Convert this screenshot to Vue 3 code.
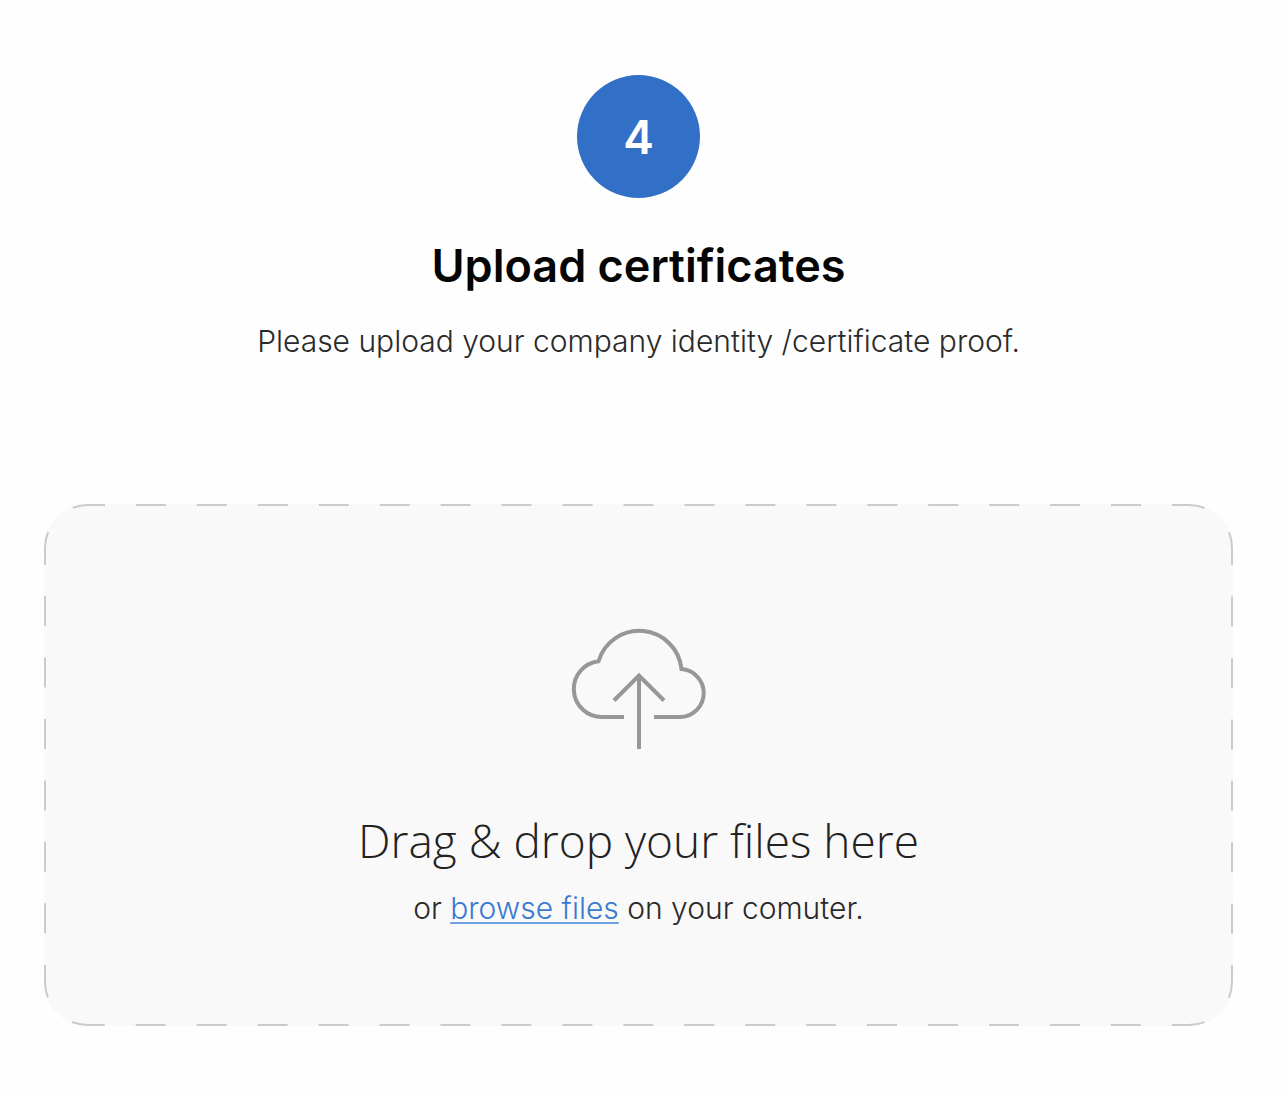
<script setup>
import { computed, onBeforeUnmount, onMounted, ref } from 'vue'

const RADIUS = 43
const DASH = 30
const CORNER_DASH = 33
const CORNER_REACH = 17

const zone = ref(null)
const size = ref({ width: 1189, height: 522 })
let observer

// Fits whole dashes between the two corner dashes of one side.
function sideDashes(length) {
  const room = length - 2 * RADIUS - 2 * CORNER_REACH
  const count = Math.max(0, Math.round((room - DASH) / (2 * DASH + 1)))
  const gap = (room - count * DASH) / (count + 1)
  const list = [CORNER_DASH, gap]
  for (let i = 0; i < count; i++) list.push(DASH, gap)
  const cornerGap = (Math.PI * RADIUS) / 2 - 2 * (CORNER_DASH - CORNER_REACH)
  return [...list, CORNER_DASH, cornerGap]
}

const dashes = computed(() => {
  const across = sideDashes(size.value.width - 2)
  const down = sideDashes(size.value.height - 2)
  return [...across, ...down, ...across, ...down].join(' ')
})

onMounted(() => {
  const measure = () => {
    size.value = { width: zone.value.offsetWidth, height: zone.value.offsetHeight }
  }
  measure()
  observer = new ResizeObserver(measure)
  observer.observe(zone.value)
})
onBeforeUnmount(() => observer?.disconnect())
</script>

<template>
  <main class="page">
    <header class="intro">
      <span class="step">4</span>
      <h1 class="title">Upload certificates</h1>
      <p class="text">Please upload your company identity /certificate proof.</p>
    </header>

    <section ref="zone" class="zone">
      <svg class="outline" aria-hidden="true">
        <rect
          x="1" y="1" :rx="RADIUS"
          :width="size.width - 2" :height="size.height - 2"
          :stroke-dasharray="dashes" :stroke-dashoffset="CORNER_DASH - CORNER_REACH"
        />
      </svg>
      <svg class="cloud" viewBox="0 0 136 124" aria-hidden="true">
        <path d="M53 89H31A28 28 0 0 1 27.500 33.200A42.500 42.500 0 0 1 110.500 41.100A24 24 0 0 1 110 89H83" />
        <path d="M68 121V48M43 72.500L68 47.500L93 72.500" />
      </svg>
      <h2 class="prompt">Drag &amp; drop your files here</h2>
      <p class="text">or <a class="link" href="#">browse files</a> on your comuter.</p>
    </section>
  </main>
</template>

<style>
body {
  background: #fefefe;
}
</style>

<style scoped>
.page {
  padding: 75px 55px 64px 44px;
  font-family: Inter, "Liberation Sans", sans-serif;
  text-align: center;
}
.intro {
  display: flex;
  flex-direction: column;
  align-items: center;
}
.step {
  width: 123px;
  height: 123px;
  border-radius: 50%;
  background: #3170c6;
  color: #fff;
  font-size: 46px;
  font-weight: 600;
  line-height: 124px;
}
.title {
  margin: 36px 0 0;
  color: #050505;
  font-size: 45px;
  font-weight: 600;
  line-height: 64px;
}
.text {
  margin: 21px 0 0;
  color: #2a2a2a;
  font-size: 30px;
  font-weight: 300;
  line-height: 44px;
}
.zone {
  position: relative;
  display: flex;
  flex-direction: column;
  align-items: center;
  margin-top: 141px;
  padding: 124px 24px 96px;
  border-radius: 44px;
  background: #f9f9f9;
}
.outline {
  position: absolute;
  inset: 0;
  width: 100%;
  height: 100%;
}
.outline rect {
  fill: none;
  stroke: #cbcbcb;
  stroke-width: 2;
}
.cloud {
  width: 136px;
  height: 124px;
  fill: none;
  stroke: #979797;
  stroke-width: 4;
}
.prompt {
  margin: 56px 0 0;
  color: #222;
  font-family: "Open Sans", "Liberation Sans", sans-serif;
  font-size: 46px;
  font-weight: 300;
  line-height: 64px;
}
.zone .text {
  margin-top: 14px;
}
.link {
  color: #3a7bd0;
  text-decoration-color: #6fa2e0;
  text-decoration-thickness: 2px;
  text-underline-offset: 3px;
  text-decoration-skip-ink: none;
}
</style>
